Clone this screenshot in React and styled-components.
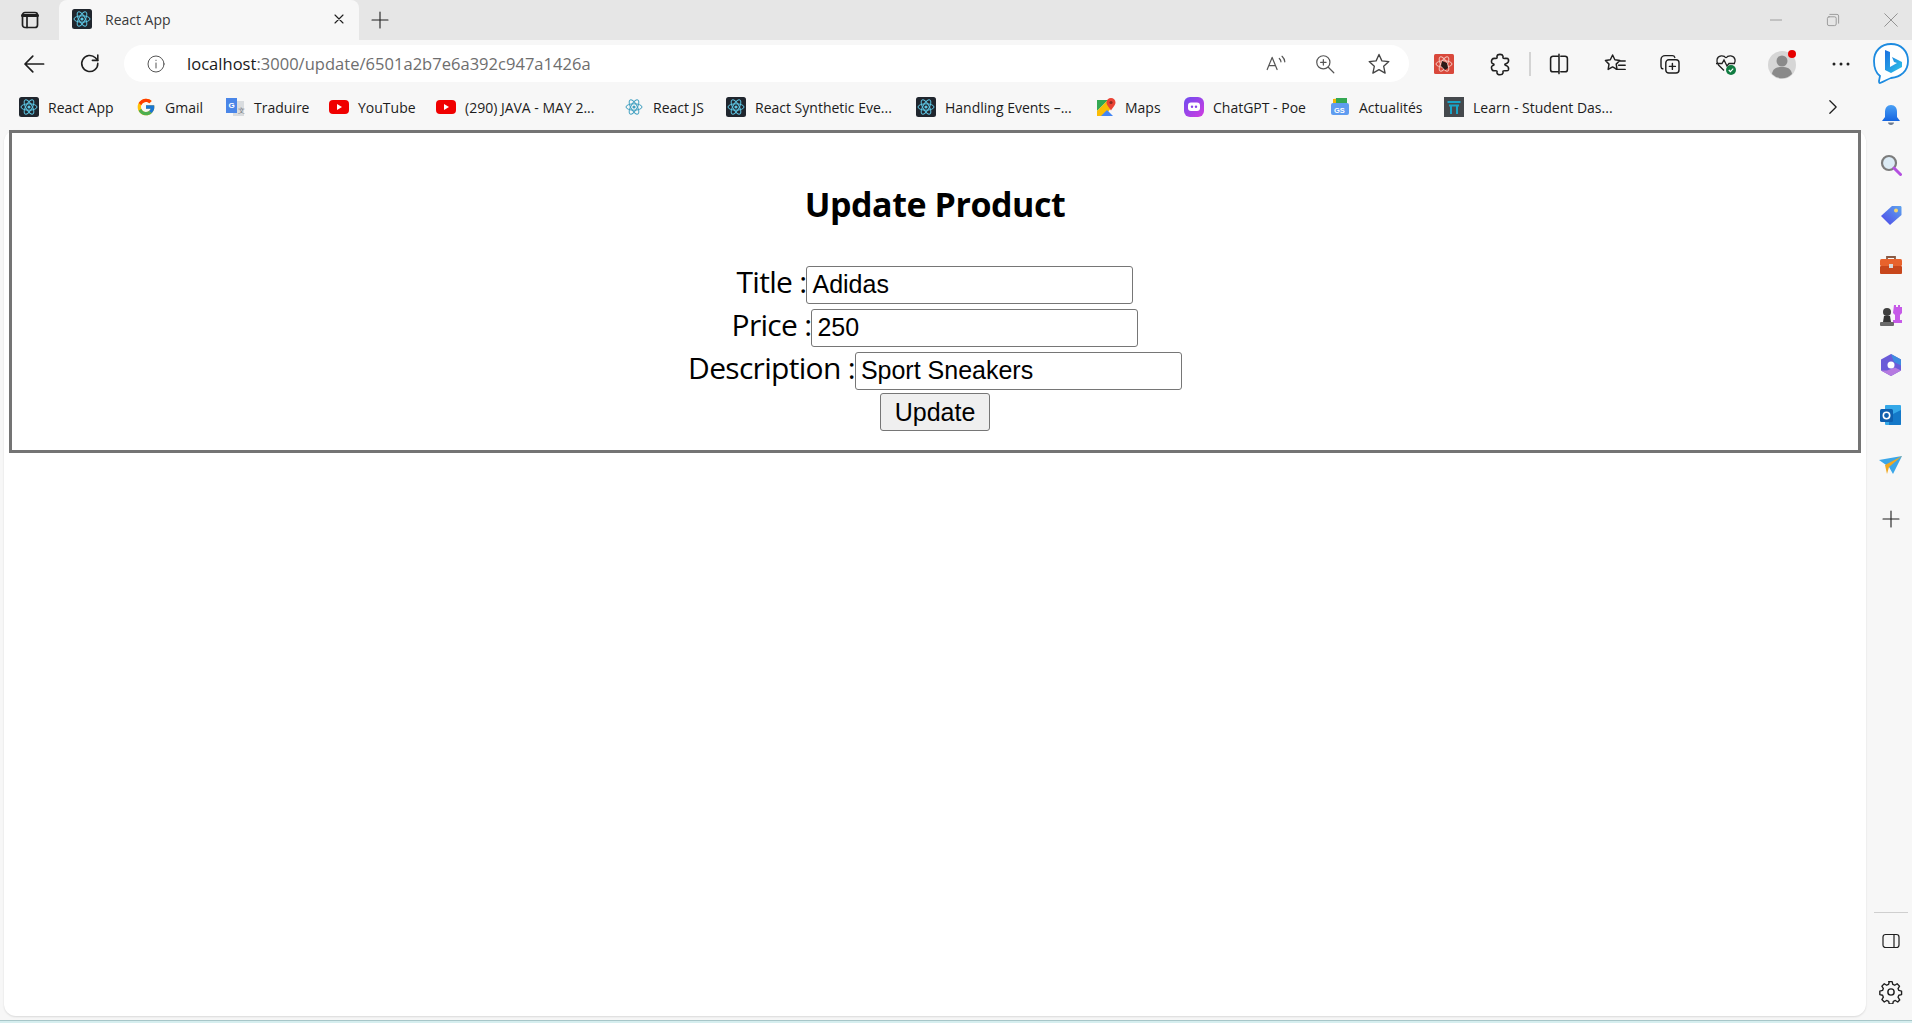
import React, { useState } from 'react'
import styled, { createGlobalStyle } from 'styled-components'
import { FcGoogle } from 'react-icons/fc'

const GlobalStyle = createGlobalStyle`
  html, body {
    margin: 0;
    padding: 0;
    background: #f7f7f7;
    font-family: "Open Sans", "Noto Sans", sans-serif;
    overflow: hidden;
  }
`

const Screen = styled.div`
  width: 1912px;
  height: 1023px;
  display: flex;
  flex-direction: column;
  overflow: hidden;
  background: #f7f7f7;
`

const TitleBar = styled.div`
  height: 40px;
  flex: none;
  display: flex;
  align-items: center;
  background: #e6e6e6;
`

const Slot = styled.div`
  width: ${({ $w }) => $w}px;
  height: 100%;
  flex: none;
  display: flex;
  align-items: center;
  justify-content: center;
  position: relative;
`

const Tab = styled.div`
  width: 300px;
  height: 40px;
  flex: none;
  box-sizing: border-box;
  padding: 0 12px 2px 13px;
  display: flex;
  align-items: center;
  background: #f7f7f7;
  border-radius: 8px 8px 0 0;
`

const TabTitle = styled.span`
  flex: 1;
  margin-left: 13px;
  font-size: 14px;
  color: #3a3a3a;
`

const Spacer = styled.div`
  flex: 1;
`

const Body = styled.div`
  flex: 1;
  min-height: 0;
  display: flex;
`

const Column = styled.div`
  flex: 1;
  min-width: 0;
  display: flex;
  flex-direction: column;
`

const Toolbar = styled.div`
  height: 47px;
  flex: none;
  display: flex;
  align-items: center;
  padding-left: 6px;
`

const ToolSlot = styled(Slot)`
  height: 38px;
`

const AddressBar = styled.div`
  width: 1285px;
  height: 37px;
  flex: none;
  margin-left: 7px;
  display: flex;
  align-items: center;
  background: #fff;
  border-radius: 19px;
`

const UrlText = styled.span`
  flex: 1;
  font-size: 16.5px;
  letter-spacing: 0.03px;
  color: #6e6e6e;

  b {
    font-weight: 400;
    color: #1a1a1a;
  }
`

const Separator = styled.div`
  width: 2px;
  height: 24px;
  flex: none;
  margin-left: 8px;
  background: #d4d4d4;
`

const BookmarkBar = styled.div`
  height: 43px;
  flex: none;
  box-sizing: border-box;
  display: flex;
  align-items: center;
  padding: 0 0 3px 19px;
`

const Bookmark = styled.div`
  width: ${({ $w }) => $w}px;
  flex: none;
  display: flex;
  align-items: center;
  gap: 9px;
  white-space: nowrap;
  font-size: 14px;
  color: #1c1c1c;
`

const Chevron = styled.div`
  margin-left: 209px;
  display: flex;
`

const Page = styled.main`
  flex: 1;
  min-height: 0;
  margin: 0 0 4px 4px;
  padding: 0 5px 0 5px;
  background: #fff;
  border-radius: 12px;
  box-shadow: 0 1px 2px rgba(0, 0, 0, 0.12);
`

const UpdateBox = styled.section`
  height: 323px;
  box-sizing: border-box;
  border: 3px solid #747474;
  text-align: center;
  color: #000;
`

const Heading = styled.h2`
  margin: 0;
  padding-top: 48px;
  height: 83px;
  line-height: 47px;
  font-size: 34px;
  font-weight: 700;
  letter-spacing: -0.45px;
`

const Form = styled.form`
  margin: 0;
`

const Row = styled.div`
  height: 43px;
  display: flex;
  justify-content: center;
  align-items: baseline;
`

const Label = styled.label`
  font-size: 30px;
  line-height: 35px;
  letter-spacing: -0.7px;
`

const Field = styled.input`
  width: 327px;
  height: 38px;
  box-sizing: border-box;
  padding: 0 5px;
  border: 1px solid #767676;
  border-radius: 3px;
  background: #fff;
  color: #000;
  font-family: "Liberation Sans", Arial, sans-serif;
  font-size: 25px;
  outline: none;
`

const UpdateButton = styled.button`
  width: 110px;
  height: 38px;
  padding: 0;
  border: 1px solid #767676;
  border-radius: 3px;
  background: #efefef;
  color: #000;
  font-family: "Liberation Sans", Arial, sans-serif;
  font-size: 25px;
`

const SideBar = styled.aside`
  width: 46px;
  flex: none;
  box-sizing: border-box;
  padding-bottom: 5px;
  display: flex;
  flex-direction: column;
  align-items: flex-end;
`

const SideSlot = styled.div`
  width: 42px;
  height: ${({ $h }) => $h || 50}px;
  flex: none;
  box-sizing: border-box;
  padding-top: ${({ $top }) => $top || 0}px;
  display: flex;
  align-items: center;
  justify-content: center;
`

const SideRule = styled.div`
  width: 34px;
  height: 1px;
  flex: none;
  margin-right: 4px;
  background: #cfcfcf;
`

const BottomStrip = styled.div`
  height: 3px;
  flex: none;
  border-top: 1px solid #a8c6c8;
  box-sizing: border-box;
  background: #d6eeef;
`

const Line = ({ size = 20, w = 1.3, color = '#1f1f1f', vb = 20, children }) => (
  <svg width={size} height={size} viewBox={`0 0 ${vb} ${vb}`} fill="none" stroke={color} strokeWidth={w} strokeLinecap="round" strokeLinejoin="round">
    {children}
  </svg>
)

const ReactLogo = ({ dark = true }) => (
  <svg width="20" height="20" viewBox="0 0 20 20">
    {dark && <rect width="20" height="20" rx="2.5" fill="#20262e" />}
    <g fill="none" stroke={dark ? '#5ec8e6' : '#3f9fc0'} strokeWidth="1">
      <ellipse cx="10" cy="10" rx="8" ry="3.2" />
      <ellipse cx="10" cy="10" rx="8" ry="3.2" transform="rotate(60 10 10)" />
      <ellipse cx="10" cy="10" rx="8" ry="3.2" transform="rotate(120 10 10)" />
    </g>
    <circle cx="10" cy="10" r="1.6" fill={dark ? '#5ec8e6' : '#3f9fc0'} />
  </svg>
)

const TranslateLogo = () => (
  <svg width="20" height="20" viewBox="0 0 20 20">
    <path d="M8 4h11v15H8z" fill="#d9dcdf" />
    <path d="M1 1h11v15H1z" fill="#4a86e8" />
    <text x="3.5" y="11" fontSize="8" fontWeight="700" fill="#fff" fontFamily="Liberation Sans">G</text>
    <text x="12.5" y="16" fontSize="7" fill="#70757a" fontFamily="Liberation Sans">文</text>
  </svg>
)

const YoutubeLogo = () => (
  <svg width="20" height="16" viewBox="0 0 20 16">
    <rect y="1" width="20" height="14" rx="4" fill="#f00000" />
    <path d="M8 5l5 3-5 3z" fill="#fff" />
  </svg>
)

const MapsLogo = () => (
  <svg width="20" height="20" viewBox="0 0 20 20">
    <path d="M1 3h11L1 14z" fill="#34a853" />
    <path d="M1 19V14L12 3l3 8-6 8z" fill="#fbbc04" />
    <path d="M5 19l6-6 6 6z" fill="#4285f4" />
    <path d="M15 1a4.5 4.5 0 0 1 4.5 4.5c0 3-3 5-4.5 8-1.500-3-4.500-5-4.500-8A4.500 4.500 0 0 1 15 1z" fill="#ea4335" />
    <circle cx="15" cy="5.500" r="1.600" fill="#8c2a20" />
  </svg>
)

const PoeLogo = () => (
  <svg width="20" height="20" viewBox="0 0 20 20">
    <defs>
      <linearGradient id="poeFill" x1="0" y1="0" x2="1" y2="1">
        <stop offset="0" stopColor="#6d4cf0" />
        <stop offset="1" stopColor="#d23ce0" />
      </linearGradient>
    </defs>
    <rect width="20" height="20" rx="6" fill="url(#poeFill)" />
    <rect x="4" y="5.500" width="12" height="8.500" rx="3" fill="#fff" />
    <circle cx="8" cy="9.700" r="1.200" fill="#8a45e8" />
    <circle cx="12" cy="9.700" r="1.200" fill="#8a45e8" />
  </svg>
)

const NewsLogo = () => (
  <svg width="20" height="20" viewBox="0 0 20 20">
    <path d="M3 2l11-1 1 5H3z" fill="#f2b705" />
    <path d="M6 1h11v6H6z" fill="#34a853" />
    <rect x="1" y="6" width="18" height="12" rx="2" fill="#5f9cf0" />
    <text x="4" y="15.500" fontSize="7.500" fontWeight="700" fill="#fff" fontFamily="Liberation Sans">GS</text>
  </svg>
)

const LearnLogo = () => (
  <svg width="20" height="20" viewBox="0 0 20 20">
    <rect width="20" height="20" fill="#45494d" />
    <path d="M3.500 5h13M5 8.500h10M7 8.500V17M13 8.500V17" stroke="#19a4c8" strokeWidth="2" fill="none" />
  </svg>
)

const ExtensionLogo = () => (
  <svg width="20" height="20" viewBox="0 0 20 20">
    <rect width="20" height="20" rx="1.500" fill="#d9483b" />
    <g fill="none" stroke="#f4c6bd" strokeWidth="1">
      <ellipse cx="10" cy="10" rx="8" ry="3.200" />
      <ellipse cx="10" cy="10" rx="8" ry="3.200" transform="rotate(60 10 10)" />
      <ellipse cx="10" cy="10" rx="8" ry="3.200" transform="rotate(120 10 10)" />
    </g>
    <path d="M8 7l5 2 1 5-3 2-4-4z" fill="#2b1a18" />
  </svg>
)

const Avatar = () => (
  <svg width="30" height="30" viewBox="0 0 30 30">
    <circle cx="14" cy="16" r="14" fill="#d6d6d6" />
    <circle cx="14" cy="12" r="5.500" fill="#8a8a8a" />
    <path d="M4 25c1-6 5-7 10-7s9 1 10 7a14 14 0 0 1-20 0z" fill="#8a8a8a" />
    <circle cx="24" cy="5" r="4" fill="#e60000" />
  </svg>
)

const BingLogo = () => (
  <svg width="38" height="42" viewBox="0 0 38 42">
    <defs>
      <linearGradient id="bingFill" x1="0" y1="0" x2="1" y2="1">
        <stop offset="0" stopColor="#1b6fe0" />
        <stop offset="1" stopColor="#2fc6e8" />
      </linearGradient>
    </defs>
    <path d="M19 2c10 0 17 7 17 17s-7 16-17 17c-3 1-8 4-11 5-1 0-1-1-1-2l1-5C4 31 2 25 2 19 2 9 9 2 19 2z" fill="#fff" stroke="#1d8be0" strokeWidth="1.800" />
    <path d="M13 8l5 2v15l7-4-3-1-2-5 10 5v5l-11 6-6-3z" fill="url(#bingFill)" />
  </svg>
)

const Bell = () => (
  <svg width="20" height="22" viewBox="0 0 20 22">
    <defs>
      <linearGradient id="bellFill" x1="0" y1="0" x2="0" y2="1">
        <stop offset="0" stopColor="#4aa0f5" />
        <stop offset="1" stopColor="#1565e0" />
      </linearGradient>
    </defs>
    <path d="M10 1c4 0 6 3 6 7v5l3 4H1l3-4V8c0-4 2-7 6-7z" fill="url(#bellFill)" />
    <path d="M7 18.500h6c0 1.500-1.500 2.500-3 2.500s-3-1-3-2.500z" fill="#6b7a90" />
  </svg>
)

const SearchGlass = () => (
  <svg width="22" height="22" viewBox="0 0 22 22">
    <circle cx="9" cy="9" r="7" fill="#dcebf5" stroke="#7c7c7c" strokeWidth="2.200" />
    <path d="M14 14l6.500 6.500" stroke="#b450e0" strokeWidth="3" strokeLinecap="round" />
  </svg>
)

const TagIcon = () => (
  <svg width="22" height="22" viewBox="0 0 22 22">
    <defs>
      <linearGradient id="tagFill" x1="1" y1="0" x2="0" y2="1">
        <stop offset="0" stopColor="#5ea4ee" />
        <stop offset="1" stopColor="#4d45e8" />
      </linearGradient>
    </defs>
    <path d="M12 2h8c1 0 1.500.5 1.500 1.500V11L10 21 1 12z" fill="url(#tagFill)" />
    <circle cx="16" cy="6.500" r="2" fill="#f5d76e" />
  </svg>
)

const Toolbox = () => (
  <svg width="22" height="20" viewBox="0 0 22 20">
    <path d="M7 5V2h8v3" fill="none" stroke="#8a5a44" strokeWidth="1.800" />
    <rect y="4" width="22" height="7" rx="1.500" fill="#e8622c" />
    <rect y="11" width="22" height="8" rx="1" fill="#c8471c" />
    <rect x="9" y="9" width="4" height="4" fill="#d8d8d8" />
  </svg>
)

const Chess = () => (
  <svg width="24" height="24" viewBox="0 0 24 24">
    <path d="M15 2h2v2h2V2h2v2h2v6l-2 2v5h2v3h-9v-3h2v-5l-2-2z" fill="#c65ae8" />
    <circle cx="8" cy="9" r="4" fill="#3f3f3f" />
    <path d="M5 13h6l1 6H4z" fill="#333" />
    <rect x="1" y="19" width="14" height="4" rx="1" fill="#6a6a6a" />
  </svg>
)

const Copilot = () => (
  <svg width="22" height="24" viewBox="0 0 22 24">
    <path d="M11 1l10 5.500v11L11 23 1 17.500v-11z" fill="#6a5bd8" />
    <path d="M11 1l10 5.500v6L14 9z" fill="#3e8be0" />
    <path d="M1 17.500l10 5.500 10-5.500-6-3-8 3z" fill="#b67ae0" />
    <circle cx="11" cy="12" r="3.500" fill="#fff" />
  </svg>
)

const Outlook = () => (
  <svg width="22" height="22" viewBox="0 0 22 22">
    <rect x="5" y="1" width="16" height="20" rx="1" fill="#35a8e8" />
    <path d="M9 12l12-6v14a1 1 0 0 1-1 1H9z" fill="#1478c8" />
    <rect x="0" y="5" width="13" height="13" rx="1.500" fill="#0f5fae" />
    <circle cx="6.500" cy="11.500" r="3.200" fill="none" stroke="#fff" strokeWidth="1.600" />
  </svg>
)

const PlaneIcon = () => (
  <svg width="24" height="18" viewBox="0 0 24 18">
    <path d="M0 4l23-4-9 18-4-7z" fill="#3ba6e8" />
    <path d="M23 0L10 11l-2 7-2-9z" fill="#f0a820" />
  </svg>
)

const bookmarks = [
  { label: 'React App', width: 117, icon: <ReactLogo /> },
  { label: 'Gmail', width: 89, icon: <FcGoogle size={20} /> },
  { label: 'Traduire', width: 104, icon: <TranslateLogo /> },
  { label: 'YouTube', width: 107, icon: <YoutubeLogo /> },
  { label: '(290) JAVA - MAY 2...', width: 188, icon: <YoutubeLogo /> },
  { label: 'React JS', width: 102, icon: <ReactLogo dark={false} /> },
  { label: 'React Synthetic Eve...', width: 190, icon: <ReactLogo /> },
  { label: 'Handling Events –...', width: 180, icon: <ReactLogo /> },
  { label: 'Maps', width: 88, icon: <MapsLogo /> },
  { label: 'ChatGPT - Poe', width: 146, icon: <PoeLogo /> },
  { label: 'Actualités', width: 114, icon: <NewsLogo /> },
  { label: 'Learn - Student Das...', width: 171, icon: <LearnLogo /> },
]

const sideIcons = [<SearchGlass />, <TagIcon />, <Toolbox />, <Chess />, <Copilot />, <Outlook />, <PlaneIcon />]

function App() {
  const [title, setTitle] = useState('Adidas')
  const [price, setPrice] = useState('250')
  const [description, setDescription] = useState('Sport Sneakers')

  return (
    <Screen>
      <GlobalStyle />
      <TitleBar>
        <Slot $w={59}>
          <Line size={20} w={1.7}>
            <rect x="2.500" y="2.500" width="15" height="15" rx="2.500" />
            <path d="M2.500 5.500h15" strokeWidth="3" />
            <path d="M7 6v11.500" />
          </Line>
        </Slot>
        <Tab>
          <ReactLogo />
          <TabTitle>React App</TabTitle>
          <Line size={16} w={1.4}><path d="M5 5l10 10M15 5L5 15" /></Line>
        </Tab>
        <Slot $w={42}>
          <Line size={20} w={1.1}><path d="M10 2v16M2 10h16" /></Line>
        </Slot>
        <Spacer />
        <Slot $w={40}><Line size={16} w={1} color="#8a8a8a"><path d="M3 10h14" /></Line></Slot>
        <Slot $w={74}>
          <Line size={16} w={1} color="#8a8a8a">
            <rect x="3" y="6" width="11" height="11" rx="2" />
            <path d="M6 3h9a2 2 0 0 1 2 2v9" />
          </Line>
        </Slot>
        <Slot $w={42}><Line size={18} w={1} color="#8a8a8a"><path d="M3 3l14 14M17 3L3 17" /></Line></Slot>
      </TitleBar>

      <Body>
        <Column>
          <Toolbar>
            <ToolSlot $w={56}>
              <Line size={24} w={1.4}><path d="M18 10H2.500M9 3.500L2.500 10 9 16.500" /></Line>
            </ToolSlot>
            <ToolSlot $w={55}>
              <Line size={24} w={1.3}>
                <path d="M16.500 9.500a6.700 6.700 0 1 1-2-4.700L16.500 7" />
                <path d="M16.500 2.500V7H12" />
              </Line>
            </ToolSlot>
            <AddressBar>
              <Slot $w={63}>
                <Line size={20} w={1} color="#555">
                  <circle cx="10" cy="10" r="8" />
                  <path d="M10 9v5M10 6.200v.3" />
                </Line>
              </Slot>
              <UrlText><b>localhost</b>:3000/update/6501a2b7e6a392c947a1426a</UrlText>
              <Slot $w={49}>
                <Line size={22} w={1.1} color="#555">
                  <path d="M2 15L6.500 4 11 15M3.600 11.500h5.800" />
                  <path d="M13 5c1 1 1.500 2 1.500 3M15.500 3c1.500 1.500 2.500 3 2.500 5" />
                </Line>
              </Slot>
              <Slot $w={49}>
                <Line size={22} w={1.1} color="#555">
                  <circle cx="8.500" cy="8.500" r="6" />
                  <path d="M13 13l5 5M8.500 6v5M6 8.500h5" />
                </Line>
              </Slot>
              <Slot $w={60}>
                <Line size={24} w={1.1} color="#444">
                  <path d="M10 2l2.400 5.400 5.800.6-4.300 3.900 1.200 5.700L10 14.700l-5.100 2.900 1.200-5.700L1.800 8l5.800-.6z" />
                </Line>
              </Slot>
            </AddressBar>
            <ToolSlot $w={70}><ExtensionLogo /></ToolSlot>
            <ToolSlot $w={42}>
              <Line size={24} w={1.3}>
                <path d="M7.500 3.500c.5-2 4.500-2 5 0 .2.800-.2 1 0 1.500.5 1 4-.5 4.500 1 .400 1.500-.5 3-1.200 3.400-.8.500-1.800.2-1.800 1.100 0 .9 1 .6 1.800 1.100.7.400 1.600 1.900 1.200 3.400-.5 1.500-4 0-4.500 1-.2.500.2.700 0 1.500-.5 2-4.500 2-5 0-.2-.8.300-1 0-1.500-.5-1-3 .5-4-1-.8-1.200-.8-3 0-3.500.6-.4 1.500 0 1.500-1s-.9-.6-1.500-1c-.8-.5-.8-2.300 0-3.500 1-1.500 3.500 0 4-1 .3-.5-.2-.7 0-1.500z" />
              </Line>
            </ToolSlot>
            <Separator />
            <ToolSlot $w={56}>
              <Line size={24} w={1.3}>
                <path d="M9 3.500H5a2 2 0 0 0-2 2v9a2 2 0 0 0 2 2h4M11.500 3.500H15a2 2 0 0 1 2 2v9a2 2 0 0 1-2 2h-3.500M10 2v16" />
              </Line>
            </ToolSlot>
            <ToolSlot $w={55}>
              <Line size={24} w={1.2}>
                <path d="M8 2.500l1.900 4 4.100.6-3 3 .7 4.400L8 12.400l-3.700 2.100.7-4.400-3-3 4.100-.6zM14 7.500h4.500M13 11h5.500M11 14.500h7.500" />
              </Line>
            </ToolSlot>
            <ToolSlot $w={55}>
              <Line size={24} w={1.2}>
                <rect x="6.500" y="6.500" width="11" height="11" rx="2.500" />
                <path d="M12 9.500v5M9.500 12h5M14 4.500c-.3-1-1-1.500-2-1.500H6a3.500 3.500 0 0 0-3.500 3.500V12c0 1 .5 1.800 1.500 2" />
              </Line>
            </ToolSlot>
            <ToolSlot $w={57}>
              <svg width="24" height="24" viewBox="0 0 24 24" fill="none">
                <path d="M12 6c-2-3-8-3-9 1.500-.5 2 0 3.500 1.500 5.500l5.500 5.500" stroke="#222" strokeWidth="1.300" />
                <path d="M12 6c2-3 8-3 9 1.500.3 1.500 0 2.500-.5 3.500" stroke="#222" strokeWidth="1.300" />
                <path d="M2 11.500h6l2-3.500 3 6 2-2.500h6" stroke="#222" strokeWidth="1.300" />
                <circle cx="17" cy="18" r="5" fill="#107c41" />
                <path d="M14.800 18l1.600 1.600 2.800-3" stroke="#fff" strokeWidth="1.200" />
              </svg>
            </ToolSlot>
            <ToolSlot $w={58}><Avatar /></ToolSlot>
            <ToolSlot $w={57}>
              <svg width="20" height="6" viewBox="0 0 20 6">
                <circle cx="3" cy="3" r="1.500" fill="#222" />
                <circle cx="10" cy="3" r="1.500" fill="#222" />
                <circle cx="17" cy="3" r="1.500" fill="#222" />
              </svg>
            </ToolSlot>
          </Toolbar>

          <BookmarkBar>
            {bookmarks.map(mark => (
              <Bookmark key={mark.label} $w={mark.width}>
                {mark.icon}
                <span>{mark.label}</span>
              </Bookmark>
            ))}
            <Chevron><Line size={18} w={1.4}><path d="M6.500 3l7 7-7 7" /></Line></Chevron>
          </BookmarkBar>

          <Page>
            <UpdateBox>
              <Heading>Update Product</Heading>
              <Form onSubmit={event => event.preventDefault()}>
                <Row>
                  <Label>Title :</Label>
                  <Field value={title} onChange={event => setTitle(event.target.value)} />
                </Row>
                <Row>
                  <Label>Price :</Label>
                  <Field value={price} onChange={event => setPrice(event.target.value)} />
                </Row>
                <Row>
                  <Label>Description :</Label>
                  <Field value={description} onChange={event => setDescription(event.target.value)} />
                </Row>
                <Row>
                  <UpdateButton type="submit">Update</UpdateButton>
                </Row>
              </Form>
            </UpdateBox>
          </Page>
        </Column>

        <SideBar>
          <SideSlot $h={46}><BingLogo /></SideSlot>
          <SideSlot $h={54} $top={4}><Bell /></SideSlot>
          {sideIcons.map((icon, key) => <SideSlot key={key}>{icon}</SideSlot>)}
          <SideSlot $h={58}>
            <Line size={20} w={1.1}><path d="M10 2v16M2 10h16" /></Line>
          </SideSlot>
          <Spacer />
          <SideRule />
          <SideSlot $h={56}>
            <Line size={20} w={1.2}>
              <rect x="2" y="3.500" width="16" height="13" rx="2.500" />
              <path d="M13 3.500v13" />
            </Line>
          </SideSlot>
          <SideSlot $h={46}>
            <Line size={24} w={1.2}>
              <circle cx="10" cy="10" r="2.600" />
              <path d="M8.500 2h3l.6 2.400 1.700.7 2.100-1.300 2.100 2.100-1.300 2.100.7 1.700 2.400.6v3l-2.400.6-.7 1.700 1.300 2.100" transform="translate(0 -.5) scale(.95)" />
              <path d="M8.500 2l-.6 2.400-1.700.7-2.100-1.300-2.100 2.100 1.300 2.100-.7 1.700L.2 10.300v3l2.400.6.7 1.700-1.300 2.100 2.100 2.100 2.100-1.300 1.700.7.600 2.400h3l.6-2.400 1.700-.7 2.100 1.300 1.700-1.800" transform="translate(.5 -.5) scale(.95)" />
            </Line>
          </SideSlot>
        </SideBar>
      </Body>
      <BottomStrip />
    </Screen>
  )
}

export default App
